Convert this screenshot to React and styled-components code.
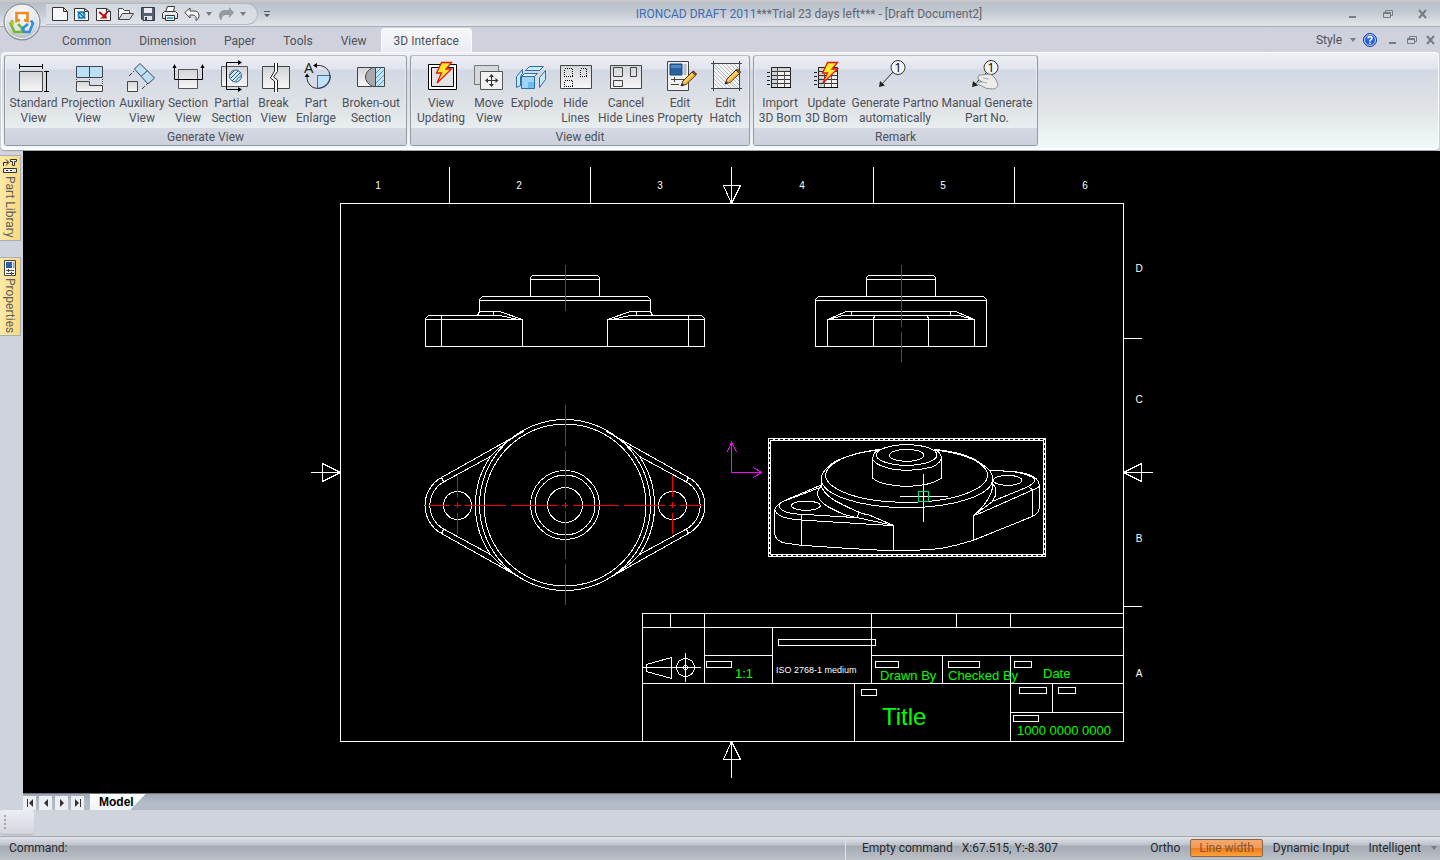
import React, { useState } from "react";
import styled, { createGlobalStyle } from "styled-components";

const GlobalStyle = createGlobalStyle`
  * {
    box-sizing: border-box;
  }
  body {
    margin: 0;
    background: #cfd3dc;
    font-family: Roboto, "Open Sans", sans-serif;
    font-size: 12px;
    color: #4c5159;
  }
  button {
    font: inherit;
    color: inherit;
    border: 0;
    padding: 0;
    background: none;
  }
`;

/* ---------- small icons ---------- */

const Caret = () => (
  <svg width="6" height="4" viewBox="0 0 6 4">
    <path d="M0 0h6L3 4z" fill="#777c84" />
  </svg>
);

const MinimizeIcon = () => (
  <svg width="10" height="10" viewBox="0 0 10 10">
    <path d="M1 7h7v2H1z" fill="#777b82" />
  </svg>
);

const RestoreIcon = () => (
  <svg width="10" height="10" viewBox="0 0 10 10">
    <path d="M2.5 3V1.5h7v5H8" fill="none" stroke="#777b82" />
    <path d="M.5 3.5h7v5h-7zM1 4.5h6" fill="none" stroke="#777b82" />
  </svg>
);

const CloseIcon = () => (
  <svg width="10" height="10" viewBox="0 0 10 10">
    <path d="M1 1l7 8M8 1L1 9" stroke="#777b82" strokeWidth="2" />
  </svg>
);

const HelpIcon = () => (
  <svg width="14" height="14" viewBox="0 0 14 14">
    <circle cx="7" cy="7" r="6.5" fill="#2460e0" stroke="#1d3c8f" />
    <circle cx="7" cy="7" r="5.5" fill="none" stroke="#c4d5fb" />
    <path
      d="M5 5.4Q5 3.6 7 3.6t2 1.7Q9 6.4 7 7.4V8.5M7 9.5v1.5"
      fill="none"
      stroke="#fff"
      strokeWidth="1.6"
    />
  </svg>
);

const quickIcons = {
  New: <path d="M.5 1.5h11l4 4v9H.5zM11.5 1.5v4h4" fill="#f7f7f9" stroke="#333" />,
  Template: (
    <>
      <path d="M.5 2.5h10l4 3v9H.5z" fill="#f7f7f9" stroke="#333" />
      <path d="M10.5 2.5v3h4" fill="none" stroke="#333" />
      <circle cx="7.5" cy="9" r="3" fill="#e6f5fd" stroke="#2391d0" strokeWidth="2" />
      <path d="M3.5 5.500l8 7M4 12.5l2-1.5M10.5 6L9 8" stroke="#1669a8" strokeWidth="1.5" />
    </>
  ),
  Import: (
    <>
      <path d="M.5 2.5h10l4 3v9H.5z" fill="#f7f7f9" stroke="#333" />
      <path d="M10.5 2.5v3h4" fill="none" stroke="#333" />
      <path d="M3 6l5 4M11.5 5.5L7.5 11" stroke="#c01010" strokeWidth="2" />
      <path d="M4 12.5h7l-1-5z" fill="#c01010" />
    </>
  ),
  Open: (
    <>
      <path d="M.5 13.5v-11h4l2 2h5v3" fill="#f4f5f7" stroke="#444" />
      <path d="M.5 13.5l4-6h11l-4 6z" fill="#d9dce2" stroke="#444" />
    </>
  ),
  Save: (
    <>
      <path d="M1.5 1.5h13v13H3l-1.5-1.5z" fill="#596070" stroke="#333b4a" />
      <path d="M4 2h8v5H4z" fill="#e9ebef" />
      <path d="M4 10h8v4H4z" fill="#dfe2e8" />
      <path d="M5 11h2v3H5z" fill="#444" />
    </>
  ),
  Print: (
    <>
      <path d="M3.5 6l2-5.500h7l-1 5.500" fill="#fff" stroke="#333" />
      <path d="M.5 7.5l2-2h11l2 2v5H.5z" fill="#e6e8ec" stroke="#333" />
      <path d="M3.5 9.5h9v5h-9z" fill="#fff" stroke="#333" />
      <path d="M5 11h6v2H5z" fill="#2fb6d8" />
    </>
  ),
  Undo: (
    <path
      d="M.8 6.5L6 2v3h4q5 0 5 5 0 3-3 4.5 1-5-3-5.500H6v3z"
      fill="#f7f7f9"
      stroke="#444"
    />
  ),
  Redo: (
    <path d="M16 6.5L11 1v3H6Q1 5 1 10q0 3 3 4.5Q3 10 7 9h4v3z" fill="#979a9f" />
  ),
};

/* ---------- ribbon icons, 32 x 32 ---------- */

const Bolt = () => (
  <path
    d="M16.5 1.500h10L21 8h5.500L12 22l4.500-10H11.500z"
    fill="#ffe92e"
    stroke="#e3180c"
    strokeWidth="1.3"
  />
);

const Pencil = () => (
  <>
    <path d="M17 25l2-5L28 11l3.5 3.5L22 23.5z" fill="#f6b73c" stroke="#4a3a20" />
    <path d="M20 21.5l9-9" stroke="#fff0b0" />
    <path d="M28 11l1.5-1 3 3-1 1.5z" fill="#a5532c" stroke="#4a3a20" />
    <path d="M17 25l1-3 2 2z" fill="#222" />
  </>
);

const BomSheet = ({ children }) => (
  <>
    <path d="M7.5 6.5h19v20h-19z" fill="#f2f2f3" stroke="#222" />
    <path d="M8 7h18v3H8zM8 11h5v15H8z" fill="#d0d2d5" />
    <path d="M7 10.5h20M7 14.5h20M7 18.5h20M7 22.5h20" stroke="#333" />
    <path d="M13.500 7v20M20.500 11v16" stroke="#555" />
    <path d="M7 26.500h20" stroke="#000" />
    <path d="M3 11.5h3M3 15.5h3M3 19.5h3M3 23.5h3" stroke="#222" />
    {children}
  </>
);

const Balloon = ({ x }) => (
  <>
    <circle cx={x} cy="6.5" r="7" fill="#f2f3f4" stroke="#333" />
    <text x={x} y="11" textAnchor="middle" fontSize="13" fontFamily="Open Sans" fill="#000">
      1
    </text>
  </>
);

const ribbonIcons = {
  standard: (
    <>
      <path d="M1.5 10.5h23v20h-23z" fill="url(#metal)" stroke="#444" />
      <path d="M1.5 3v5M24.5 3v5M1 5.5h24M26 10.5h5M26 30.5h5M28.5 10v21" stroke="#000" />
    </>
  ),
  projection: (
    <>
      <path d="M4.5 5.5h26v11h-26zM17.5 5v12" fill="#bcdff5" stroke="#3c4650" />
      <path d="M4.5 18v2M30.5 18v6M17.5 18v2" stroke="#444" strokeDasharray="1 1" />
      <path d="M4.5 20.5h13v4h13v6h-26z" fill="url(#metal)" stroke="#444" />
    </>
  ),
  auxiliary: (
    <>
      <path d="M14 2.5L28.5 17 22 23 8.5 8z" fill="#bcdff5" stroke="#3c4650" />
      <path d="M21.5 9.5L15 15.5" stroke="#3c4650" />
      <path d="M1.5 20.5h10v10h-10z" fill="url(#metal)" stroke="#444" />
      <path d="M3 15l5-5M16 28l6-6" stroke="#333" strokeDasharray="4 2" />
    </>
  ),
  section: (
    <>
      <path d="M6.5 8.5h19v19h-19z" fill="url(#metal)" stroke="#555" />
      <path d="M2.5 4v14.5h28V4" fill="none" stroke="#000" />
      <path d="M.5 7l2-4 2 4zM28.5 7l2-4 2 4z" />
    </>
  ),
  partial: (
    <>
      <path d="M5.5 5.5h26v20h-26z" fill="url(#metal)" stroke="#555" />
      <circle cx="19.5" cy="15" r="6" fill="#d5ebfa" stroke="#2d5c8c" />
      <path d="M15 17l7-7M14 14l4-4M16 20l8.5-8.5M19 20.5l6-6" stroke="#2d5c8c" />
      <path d="M24 1.5H10.5v27H24" fill="none" stroke="#000" />
      <path d="M22-1l4 2.500-4 2.500zM22 26l4 2.500-4 2.500z" />
    </>
  ),
  breakView: (
    <>
      <path d="M4.5 5.5h27v22h-27z" fill="url(#metal)" stroke="#444" />
      <path
        d="M18 2v8.500L13.500 17l5 3v12"
        fill="none"
        stroke="#fff"
        strokeWidth="3"
      />
      <path
        d="M16.5 2v8L12.500 17l4 3v11M19.500 2v8.500L15.500 16l4 3v12"
        fill="none"
        stroke="#222"
      />
    </>
  ),
  enlarge: (
    <>
      <path d="M17.5 14.5h13q0 7-5 11-4 2-8 2z" fill="#bfe2fa" stroke="#3f6f9a" />
      <path d="M16 4.5q9-1 13 6 3 8-3 13.500-6 5-13 2.500Q6 22 7 14" fill="none" stroke="#333" />
      <path d="M13 4.5l4-2.500v5zM4.500 16L7 12.500 9.500 16z" />
      <text x="4" y="12" fontSize="15" fontFamily="Open Sans" fill="#222">
        A
      </text>
    </>
  ),
  brokenOut: (
    <>
      <path d="M2.5 6.5h27v19h-27z" fill="url(#metal)" stroke="#444" />
      <path d="M20.5 7h8.5v18h-8.5z" fill="#c2e4f7" />
      <path d="M21 12l5-5M21 17l8-8M21 22l8-8M23 25l6-6" stroke="#5d9dc8" />
      <path d="M20.5 6.5v19h-3q-7-4-7-9.500t7-9.500z" fill="#a8a9ac" stroke="#444" />
    </>
  ),
  updating: (
    <>
      <path d="M3.5 3.5h28v25h-28z" fill="#fff" stroke="#000" />
      <path d="M6.5 6.5h22v19h-22z" fill="#e2e3e6" stroke="#000" />
      <Bolt />
    </>
  ),
  move: (
    <>
      <path d="M1.5 4.5h24v19h-24z" fill="#d5d8dc" stroke="#777" />
      <path d="M7.5 10.5h22v18h-22z" fill="#f1f1f2" stroke="#555" />
      <path d="M13 19.5h12M18.5 14v11" stroke="#333" />
      <path
        d="M12 19.500l3-2.500v5zM25.500 19.500L22.500 17v5zM18.500 13l2.500 3h-5zM18.500 26l2.500-3h-5z"
        fill="#333"
      />
    </>
  ),
  explode: (
    <>
      <path d="M9.5 9.5l4-4h14l-4 4z" fill="#c7e7fa" stroke="#2f6ea5" />
      <path d="M.5 15.5l6-7v4l-2 3v9l-4 2z" fill="#c7e7fa" stroke="#2f6ea5" />
      <path d="M5.5 15.5h13v12h-13z" fill="#9fd4f5" stroke="#2f6ea5" />
      <path d="M5.5 15.5l3-3h13l-3 3z" fill="#e2f3fd" stroke="#2f6ea5" />
      <path d="M23.5 16.5l6-7v9l-6 8z" fill="#c7e7fa" stroke="#2f6ea5" />
      <path d="M12 21h6v6h-6z" fill="#6dbcec" />
    </>
  ),
  hide: (
    <>
      <path d="M.5 4.5h31v23H.5z" fill="url(#metal)" stroke="#444" />
      <path
        d="M4.5 7.5h8v8h-8zM20.5 7.5h6v8h-6zM4.5 19.5h8v6h-8z"
        fill="none"
        stroke="#000"
        strokeDasharray="1 1"
        shapeRendering="crispEdges"
      />
    </>
  ),
  cancel: (
    <>
      <path d="M.5 4.5h31v23H.5z" fill="url(#metal)" stroke="#444" />
      <path
        d="M3.5 6.5h9v9h-9zM20.5 6.5h6v9h-6zM3.5 19.5h9v6h-9z"
        fill="none"
        stroke="#444"
      />
    </>
  ),
  property: (
    <>
      <path d="M3.5.5h21v29h-21z" fill="#f0f1f3" stroke="#444" />
      <path d="M6 3h12v11H6z" fill="#2a62a0" stroke="#1b4778" />
      <path d="M7 4h10v3H7z" fill="#4f8ac4" />
      <path d="M19.5 3h3v11h-3z" fill="#b9bcc2" />
      <path d="M7 18.5h14M10.5 16v5M7 23.5h8" stroke="#444" />
      <Pencil />
    </>
  ),
  hatch: (
    <>
      <path d="M3.5 2.5h26v25h-26z" fill="#f4f5f6" />
      <path
        d="M4 22l5 5M4 18l9 9M4 14l13 13M4 10l17 17M4 6l21 21M4 3l24 24M8 3l21 21M12 3l17 17M16 3l13 13M20 3l9 9M24 3l5 5"
        stroke="#a3a9b2"
        strokeWidth=".8"
      />
      <path d="M1 2.5h31M1 27.5h31M3.5 0v30M29.5 0v30" stroke="#444" />
      <g transform="translate(-2 -2)">
        <Pencil />
      </g>
    </>
  ),
  bom: <BomSheet />,
  updateBom: (
    <BomSheet>
      <Bolt />
    </BomSheet>
  ),
  partno: (
    <>
      <path d="M14 11L2 24" stroke="#333" />
      <path d="M0 26l1-6 5 4.5z" fill="#222" />
      <Balloon x={19} />
    </>
  ),
  manual: (
    <>
      <path d="M15 12L4 23" stroke="#333" />
      <path d="M1 26l1-6 5 4.5z" fill="#222" />
      <Balloon x={20} />
      <path
        d="M7 16q0-3 4-2l6-1q4 0 7 4l3 6q0 5-6 5-7 0-10-3l-5-2q-2-2 1-2l4 0-4-3z"
        fill="#ececea"
        stroke="#8d8f8f"
      />
      <path d="M12 17l6 1M11 21l5 1" stroke="#a9abab" />
    </>
  ),
};

const ribbonGroups = [
  {
    title: "Generate View",
    items: [
      { icon: "standard", label: ["Standard", "View"], width: 51 },
      { icon: "projection", label: ["Projection", "View"], width: 58 },
      { icon: "auxiliary", label: ["Auxiliary", "View"], width: 50 },
      { icon: "section", label: ["Section", "View"], width: 42 },
      { icon: "partial", label: ["Partial", "Section"], width: 45 },
      { icon: "breakView", label: ["Break", "View"], width: 39 },
      { icon: "enlarge", label: ["Part", "Enlarge"], width: 46 },
      { icon: "brokenOut", label: ["Broken-out", "Section"], width: 64 },
    ],
  },
  {
    title: "View edit",
    items: [
      { icon: "updating", label: ["View", "Updating"], width: 54 },
      { icon: "move", label: ["Move", "View"], width: 42 },
      { icon: "explode", label: ["Explode"], width: 44 },
      { icon: "hide", label: ["Hide", "Lines"], width: 43 },
      { icon: "cancel", label: ["Cancel", "Hide Lines"], width: 58 },
      { icon: "property", label: ["Edit", "Property"], width: 50 },
      { icon: "hatch", label: ["Edit", "Hatch"], width: 41 },
    ],
  },
  {
    title: "Remark",
    items: [
      { icon: "bom", label: ["Import", "3D Bom"], width: 46 },
      { icon: "updateBom", label: ["Update", "3D Bom"], width: 47 },
      { icon: "partno", label: ["Generate Partno", "automatically"], width: 90 },
      { icon: "manual", label: ["Manual Generate", "Part No."], width: 94 },
    ],
  },
];

const tabs = ["Common", "Dimension", "Paper", "Tools", "View", "3D Interface"];

/* ---------- drawing ---------- */

const FrontHalf = () => (
  <path
    d="M565 275H532L530 277V296M530 279H565M565 296H482L479 299V311L478 313L477 315M479 300H565
       M479 311H499L522 319M493 311V315H499L518 319M493 315H428L425 318V346H565
       M425 319H522V346M441 316V346"
  />
);

const SideHalf = () => (
  <path
    d="M901 275H868L866 277V296M866 279H901M901 296H818L815 299V346H901M815 300H901
       M901 311H846L827 319V346M901 315H842L829 319M827 319H901M851 311V315M874 315L873 319V346"
  />
);

const TopHalf = () => (
  <>
    <path d="M523 431L441 477A32 32 0 0 0 441 533L523 579" />
    <path d="M490 456L444 481A27 27 0 0 0 444 529L490 554" />
    <path d="M490 456A87 87 0 0 0 490 554M490 456Q500 445 516 435M490 554Q500 565 516 575" />
    <path d="M441 477L443 481M441 533L443 529" />
    <circle cx="457" cy="505" r="14" />
  </>
);

const CenterLines = () => (
  <g stroke="#f00">
    <path d="M565 265V310M901 265V326M901 332V361" />
    <path d="M565 405V445M565 451V499M565 502V507M565 511V558M565 564V604" />
    <path
      d="M429 505H448M454 505H460M465 505H505M511 505H556M562 505H567
         M573 505H618M624 505H664M669 505H675M680 505H700"
    />
    <path d="M457 476V496M457 502V507M457 513V533M672 476V496M672 502V507M672 513V533" />
  </g>
);

// The isometric view is drawn on a grid three times finer than the sheet.
const IsoView = () => (
  <g transform="translate(720 260) scale(.33333)">
    <ellipse cx="560" cy="586" rx="52" ry="18" />
    <ellipse cx="560" cy="585" rx="91" ry="31" />
    <path d="M478 567Q458 577 458 598Q464 614 510 626Q575 638 635 621Q664 609 664 592Q662 575 642 567" />
    <path d="M458 592V654Q475 672 540 678Q620 683 664 655V590" />
    <path d="M474 570A243 81 0 1 0 646 570" />
    <path d="M480 568Q395 578 345 605Q304 630 304 657V682M642 568Q740 577 785 612Q818 632 818 657V690" />
    <path d="M304 657A257 86 0 0 0 818 657" />
    <path d="M304 680Q318 712 370 735Q400 750 425 760L450 766L520 796L412 773L416 758" />
    <path d="M304 676Q288 692 295 712Q308 735 340 748Q370 766 412 773" />
    <path d="M304 675L200 719Q165 735 164 752V820Q166 845 200 850L245 856L380 865L490 871H585L660 866Q710 857 760 841L938 769Q958 760 958 742V672" />
    <path d="M304 681L180 728Q172 745 195 755Q220 764 280 765L412 773" />
    <path d="M164 748Q170 771 210 776Q240 781 290 783L520 797V871M245 765V856" />
    <ellipse cx="258" cy="737" rx="43" ry="14" />
    <ellipse cx="863" cy="661" rx="43" ry="15" />
    <path d="M805 630L880 635Q920 638 940 650Q958 660 958 678Q955 684 938 690L775 762L760 766V841" />
    <path d="M880 635Q925 643 942 655Q950 670 910 686L820 723L762 766Q812 722 818 680M818 670Q838 695 818 722" />
    <path d="M925 680L938 690V769" />
  </g>
);

const TitleBlock = () => (
  <g>
    <path
      d="M642 741V613H1123M642 627H1123M642 683H1123M704 655H772M871 655H1123M1010 712H1123
         M670 613V627M704 613V683M772 627V683M871 613V683M956 613V627M1010 613V627
         M1010 655V741M942 655V683M854 683V741M1052 683V712"
    />
    <path
      d="M778 639h97v6h-97zM706 661h25v6h-25zM875 661h23v6h-23zM948 661h31v6h-31zM1014 661h17v6h-17z
         M861 689h15v6h-15zM1019 687h27v6h-27zM1058 687h17v6h-17zM1013 715h25v6h-25z"
    />
    <path d="M646 664L671 657V678L646 671ZM642 667H700M685 653V681" />
    <circle cx="685" cy="667" r="9" />
    <circle cx="685" cy="667" r="2" />
  </g>
);

const columnMarks = [378, 519, 660, 802, 943, 1085];
const rowMarks = [
  ["D", 272],
  ["C", 403],
  ["B", 542],
  ["A", 677],
];

const Drawing = () => (
  <SheetView viewBox="23 151 1417 642" role="img" aria-label="Draft Document2">
    <g
      transform="translate(.5 .5)"
      fill="none"
      stroke="#fff"
      strokeLinecap="square"
      shapeRendering="crispEdges"
    >
      <path d="M340 203H1123V741H340Z" />
      <path d="M449 167V203M590 167V203M873 167V203M1014 167V203M1123 338H1141M1123 606H1141" />
      <path d="M731 167V203L723 185H740L731 203M311 472H340L322 463V481L340 472" />
      <path d="M1152 472H1123L1141 463V481L1123 472M731 777V741L723 759H740L731 741" />
      <FrontHalf />
      <g transform="matrix(-1 0 0 1 1129 0)">
        <FrontHalf />
      </g>
      <SideHalf />
      <g transform="matrix(-1 0 0 1 1801 0)">
        <SideHalf />
      </g>
      <TopHalf />
      <g transform="matrix(-1 0 0 1 1129 0)">
        <TopHalf />
      </g>
      <circle cx="564.5" cy="504.5" r="85.5" />
      <circle cx="564.5" cy="504.5" r="81" />
      <circle cx="564.5" cy="504.5" r="34.5" />
      <circle cx="564.5" cy="504.5" r="30" />
      <circle cx="564.5" cy="504.5" r="17.5" />
      <CenterLines />
      <TitleBlock />
      <path
        d="M731 442V472H761M727 451L731 442L736 451M753 467L761 472L753 477"
        stroke="#f0f"
      />
      <path d="M769 439H1044V555H769Z" strokeWidth="3" />
      <path
        d="M769 439H1044V555H769Z"
        stroke="#000"
        strokeDasharray="3 2"
        strokeLinecap="butt"
      />
    </g>
    <LineWork>
      <IsoView />
    </LineWork>
    <g transform="translate(.5 .5)" fill="none" stroke="#fff" shapeRendering="crispEdges">
      <path d="M899 496H947M923 473V521" />
      <path d="M918 491h10v10h-10z" stroke="#00e676" />
    </g>
    <g fill="#fff" fontSize="10" textAnchor="middle">
      {columnMarks.map((x, i) => (
        <text key={x} x={x} y="189">
          {i + 1}
        </text>
      ))}
      {rowMarks.map(([mark, y]) => (
        <text key={mark} x="1139" y={y}>
          {mark}
        </text>
      ))}
    </g>
    <text x="776" y="673" fill="#fff" fontSize="9">
      ISO 2768-1 medium
    </text>
    <g fill="#0f0" fontSize="13">
      <text x="735" y="678">
        1:1
      </text>
      <text x="880" y="680">
        Drawn By
      </text>
      <text x="948" y="680">
        Checked By
      </text>
      <text x="1043" y="678">
        Date
      </text>
      <text x="1017" y="735">
        1000 0000 0000
      </text>
      <text x="882" y="725" fontSize="24">
        Title
      </text>
    </g>
  </SheetView>
);

const App = () => {
  const [activeTab, setActiveTab] = useState("3D Interface");

  return (
    <Window>
      <GlobalStyle />
      <TitleBar>
        <OrbButton aria-label="Application menu">
          <svg width="38" height="38" viewBox="0 0 38 38">
            <defs>
              <radialGradient id="orb" cx=".5" cy=".3" r=".8">
                <stop offset="0" stopColor="#fff" />
                <stop offset=".6" stopColor="#dcdfe4" />
                <stop offset="1" stopColor="#8f959e" />
              </radialGradient>
              <linearGradient id="metal" x1="0" y1="0" x2="0" y2="1">
                <stop offset="0" stopColor="#d3d4d8" />
                <stop offset="1" stopColor="#f7f7f7" />
              </linearGradient>
            </defs>
            <circle cx="19" cy="19" r="18" fill="url(#orb)" stroke="#7d838c" />
            <circle cx="19" cy="19" r="16.5" fill="none" stroke="#f3f4f6" />
            <g fill="none" strokeWidth="2.6">
              <path d="M17 17l-3.500 1V10h11v8L21 17" stroke="#f28a1c" />
              <path d="M10 17.500l-2.500 3L11.500 29H19v-4l-4-4" stroke="#74b82c" />
              <path d="M8 19.500l3 1.500" stroke="#d6c81e" />
              <path d="M28 17.500l2 3L26.500 29H21l-1-4 5-4" stroke="#2f8fd8" />
            </g>
          </svg>
        </OrbButton>
        <QuickAccess>
          {Object.keys(quickIcons).map((name) => (
            <React.Fragment key={name}>
              <QuickButton aria-label={name}>
                <svg width="16" height="16" viewBox="0 0 16 16">
                  {quickIcons[name]}
                </svg>
              </QuickButton>
              {name === "Undo" || name === "Redo" ? (
                <MoreButton aria-label={name + " list"}>
                  <Caret />
                </MoreButton>
              ) : null}
            </React.Fragment>
          ))}
        </QuickAccess>
        <CustomizeButton aria-label="Customize toolbar">
          <svg width="6" height="7" viewBox="0 0 6 7">
            <path d="M0 0h6v1H0zM0 3h6L3 6z" fill="#555a62" />
          </svg>
        </CustomizeButton>
        <Title>
          <span>IRONCAD DRAFT 2011</span>***Trial 23 days left*** - [Draft Document2]
        </Title>
        <WindowButtons $gap={25}>
          <button aria-label="Minimize">
            <MinimizeIcon />
          </button>
          <button aria-label="Restore">
            <RestoreIcon />
          </button>
          <button aria-label="Close">
            <CloseIcon />
          </button>
        </WindowButtons>
      </TitleBar>

      <TabBar>
        {tabs.map((tab) => (
          <Tab key={tab} $active={tab === activeTab} onClick={() => setActiveTab(tab)}>
            {tab}
          </Tab>
        ))}
        <TabTools>
          <StyleButton>
            Style <Caret />
          </StyleButton>
          <button aria-label="Help">
            <HelpIcon />
          </button>
          <WindowButtons $gap={9}>
            <button aria-label="Minimize document">
              <MinimizeIcon />
            </button>
            <button aria-label="Restore document">
              <RestoreIcon />
            </button>
            <button aria-label="Close document">
              <CloseIcon />
            </button>
          </WindowButtons>
        </TabTools>
      </TabBar>

      <Ribbon>
        {ribbonGroups.map((group) => (
          <Group key={group.title}>
            <GroupItems>
              {group.items.map((item) => (
                <RibbonButton key={item.icon} $width={item.width}>
                  <svg width="32" height="32" viewBox="0 0 32 32" overflow="visible">
                    {ribbonIcons[item.icon]}
                  </svg>
                  {item.label.map((line) => (
                    <span key={line}>{line}</span>
                  ))}
                </RibbonButton>
              ))}
            </GroupItems>
            <GroupTitle>{group.title}</GroupTitle>
          </Group>
        ))}
      </Ribbon>

      <Workspace>
        <Dock>
          <DockTab>
            <svg width="16" height="16" viewBox="0 0 16 16">
              <path d="M1.5 8V4.500H6M4 1.500l3 3-3 3" fill="none" stroke="#222" />
              <path
                d="M8.5 1.500h6v2h-2v4h-2v-4h-2zM1.500 10.500h13v4h-13z"
                fill="#eee"
                stroke="#333"
              />
              <path d="M4 12.5h8" stroke="#333" strokeDasharray="2 2" />
            </svg>
            Part Library
          </DockTab>
          <DockTab>
            <svg width="16" height="16" viewBox="0 0 16 16">
              <path d="M2.5.5h11v15h-11z" fill="#f5f6f8" stroke="#444" />
              <path d="M4 2h6v6H4z" fill="#2a62a0" />
              <path d="M11 2h1.500v6H11z" fill="#9aa0a8" />
              <path d="M4 10.5h8M4 13.5h8M6.5 9v3M9.5 12v3" stroke="#444" />
            </svg>
            Properties
          </DockTab>
        </Dock>
        <Stage>
          <Canvas>
            <Drawing />
          </Canvas>
          <SheetBar>
            <NavButton aria-label="First sheet">
              <svg width="8" height="8" viewBox="0 0 8 8">
                <path d="M1 0h1v8H1zM7 0v8L3 4z" fill="#333" />
              </svg>
            </NavButton>
            <NavButton aria-label="Previous sheet">
              <svg width="8" height="8" viewBox="0 0 8 8">
                <path d="M6 0v8L2 4z" fill="#333" />
              </svg>
            </NavButton>
            <NavButton aria-label="Next sheet">
              <svg width="8" height="8" viewBox="0 0 8 8">
                <path d="M2 0v8l4-4z" fill="#333" />
              </svg>
            </NavButton>
            <NavButton aria-label="Last sheet">
              <svg width="8" height="8" viewBox="0 0 8 8">
                <path d="M1 0v8l4-4zM6 0h1v8H6z" fill="#333" />
              </svg>
            </NavButton>
            <SheetTab>Model</SheetTab>
          </SheetBar>
        </Stage>
      </Workspace>

      <ToolStrip>
        <Grip>
          <svg width="2" height="16" viewBox="0 0 2 16">
            <path d="M0 0h2v2H0zM0 4h2v2H0zM0 8h2v2H0zM0 12h2v2H0z" fill="#a3a7ae" />
          </svg>
        </Grip>
      </ToolStrip>

      <StatusBar>
        <CommandLine>Command:</CommandLine>
        <StatusInfo>
          <span>Empty command</span>
          <span>X:67.515, Y:-8.307</span>
        </StatusInfo>
        <Toggles>
          <Toggle>Ortho</Toggle>
          <Toggle $on>Line width</Toggle>
          <Toggle>Dynamic Input</Toggle>
          <Toggle>Intelligent</Toggle>
          <MoreButton aria-label="Snap mode">
            <Caret />
          </MoreButton>
        </Toggles>
      </StatusBar>
    </Window>
  );
};

const Window = styled.div`
  display: flex;
  flex-direction: column;
  min-height: 100vh;
`;

const TitleBar = styled.header`
  position: relative;
  display: flex;
  align-items: center;
  height: 27px;
  padding: 0 12px 0 46px;
  border-top: 2px solid #c9c9c9;
  border-bottom: 1px solid #a9adb5;
  background: linear-gradient(#b8c0c9, #c3c9d1 40%, #e3e5ec);
`;

const OrbButton = styled.button`
  position: absolute;
  left: 3px;
  top: 1px;
  z-index: 2;
  height: 38px;
`;

const QuickAccess = styled.div`
  display: flex;
  align-items: center;
  gap: 6px;
  height: 22px;
  padding: 0 11px 0 6px;
  border: 1px solid #b4b9c1;
  border-left: 0;
  border-radius: 0 11px 11px 0;
  background: linear-gradient(#d3d7de, #dfe2e8);
`;

const QuickButton = styled.button`
  width: 16px;
  height: 16px;
`;

const MoreButton = styled.button`
  display: flex;
  align-items: center;
  width: 6px;
  height: 16px;
`;

const CustomizeButton = styled(MoreButton)`
  margin-left: 6px;
`;

const Title = styled.div`
  flex: 1;
  text-align: center;
  color: #62666e;
  white-space: nowrap;
  span {
    color: #3d6db5;
  }
`;

const WindowButtons = styled.div`
  display: flex;
  gap: ${(props) => props.$gap}px;
  button {
    display: flex;
    width: 10px;
    height: 10px;
  }
`;

const TabBar = styled.nav`
  display: flex;
  align-items: flex-end;
  height: 25px;
  padding-left: 48px;
  background: #cfd2dc;
`;

const Tab = styled.button`
  height: 24px;
  padding: 0 ${(props) => (props.$active ? 12 : 13)}px;
  border: 1px solid ${(props) => (props.$active ? "#f7f8fa" : "transparent")};
  border-bottom: 0;
  border-radius: 4px 4px 0 0;
  background: ${(props) =>
    props.$active ? "linear-gradient(#f6f8fb, #e9ecf3)" : "none"};
`;

const TabTools = styled.div`
  display: flex;
  align-items: center;
  gap: 11px;
  height: 24px;
  margin-left: auto;
  padding-right: 4px;
  button {
    display: flex;
  }
`;

const StyleButton = styled.button`
  align-items: center;
  gap: 8px;
  margin-right: -4px;
`;

const Ribbon = styled.section`
  display: flex;
  gap: 3px;
  height: 98px;
  margin: 0 1px 1px;
  padding: 2px;
  border: 1px solid #f8f9fb;
  border-bottom: 2px solid #fff;
  border-radius: 4px;
  background: linear-gradient(
    #eff1f6,
    #e1e4ed 16px,
    #d2d8e4 17px,
    #e0e3e6 55px,
    #f0fafa
  );
  box-shadow: 0 1px 1px #9a9fa8;
`;

const Group = styled.div`
  display: flex;
  flex-direction: column;
  border: 1px solid #93979e;
  border-top-color: #b9bdc5;
  border-radius: 3px;
  box-shadow: inset 0 0 0 1px #e9ecf1;
`;

const GroupItems = styled.div`
  display: flex;
  flex: 1;
  padding: 5px 3px 0;
`;

const RibbonButton = styled.button`
  display: flex;
  flex-direction: column;
  align-items: center;
  width: ${(props) => props.$width}px;
  line-height: 15px;
  white-space: nowrap;
  svg {
    flex: none;
    margin-bottom: 3px;
  }
`;

const GroupTitle = styled.div`
  height: 17px;
  line-height: 18px;
  text-align: center;
  background: linear-gradient(#d5d9e2, #cbd0da);
`;

const Workspace = styled.main`
  display: flex;
  flex: 1;
`;

const Dock = styled.aside`
  display: flex;
  flex-direction: column;
  align-items: flex-start;
  gap: 16px;
  width: 23px;
  padding-top: 4px;
`;

const DockTab = styled.button`
  display: flex;
  align-items: center;
  gap: 2px;
  width: 21px;
  padding: 2px 1px;
  border: 1px solid #a9adb8;
  border-left: 0;
  background: linear-gradient(90deg, #fdeaa8, #fbd978);
  writing-mode: vertical-rl;
  font-size: 12px;
  color: #5d5f66;
`;

const Stage = styled.div`
  display: flex;
  flex: 1;
  flex-direction: column;
`;

const Canvas = styled.div`
  display: flex;
  flex: 1;
  background: #000;
`;

const SheetView = styled.svg`
  width: 100%;
  height: 100%;
  font-family: "Liberation Sans", Arial, sans-serif;
`;

const LineWork = styled.g`
  fill: none;
  stroke: #fff;
  shape-rendering: crispEdges;
  path,
  ellipse {
    vector-effect: non-scaling-stroke;
  }
`;

const SheetBar = styled.div`
  display: flex;
  align-items: flex-end;
  gap: 3px;
  height: 17px;
  border-top: 1px solid #6d7278;
  background: linear-gradient(#9ea8b3, #b3bcc6 8px);
`;

const NavButton = styled.button`
  display: flex;
  align-items: center;
  justify-content: center;
  width: 13px;
  height: 14px;
  background: #eceef3;
`;

const SheetTab = styled.button`
  height: 16px;
  margin-left: 3px;
  padding: 0 12px 0 9px;
  background: linear-gradient(#fff, #f2f3f6);
  clip-path: polygon(0 0, 100% 0, 72% 100%, 0 100%);
  font-family: "Liberation Sans", Arial, sans-serif;
  font-weight: bold;
  color: #000;
`;

const ToolStrip = styled.div`
  height: 26px;
  background: #cfd3dc;
`;

const Grip = styled.div`
  display: flex;
  width: 34px;
  height: 25px;
  padding: 5px 4px;
  border-bottom: 1px solid #b2b5bd;
  border-radius: 3px;
  background: linear-gradient(#eceef3, #d3d6de);
`;

const StatusBar = styled.footer`
  display: flex;
  align-items: stretch;
  height: 24px;
  border-top: 1px solid #a2a5ac;
  background: linear-gradient(#e3e4ea, #bbc0ca 8px, #a6abb3 9px, #bcc0c7);
  color: #26292e;
`;

const CommandLine = styled.div`
  flex: 0 0 846px;
  padding-left: 9px;
  border-right: 1px solid #e2e4e8;
  line-height: 22px;
`;

const StatusInfo = styled.div`
  display: flex;
  gap: 9px;
  padding-left: 16px;
  line-height: 22px;
`;

const Toggles = styled.div`
  display: flex;
  align-items: center;
  gap: 1px;
  margin-left: auto;
  padding: 0 3px 1px 0;
`;

const Toggle = styled.button`
  height: 18px;
  padding: 0 8px;
  border: 1px solid ${(props) => (props.$on ? "#8a6a45" : "transparent")};
  border-radius: 2px;
  background: ${(props) =>
    props.$on ? "linear-gradient(#f4a871, #f39a55 50%, #ee7a1c 51%, #fca338)" : "none"};
  color: ${(props) => (props.$on ? "#84562e" : "inherit")};
`;

export default App;
